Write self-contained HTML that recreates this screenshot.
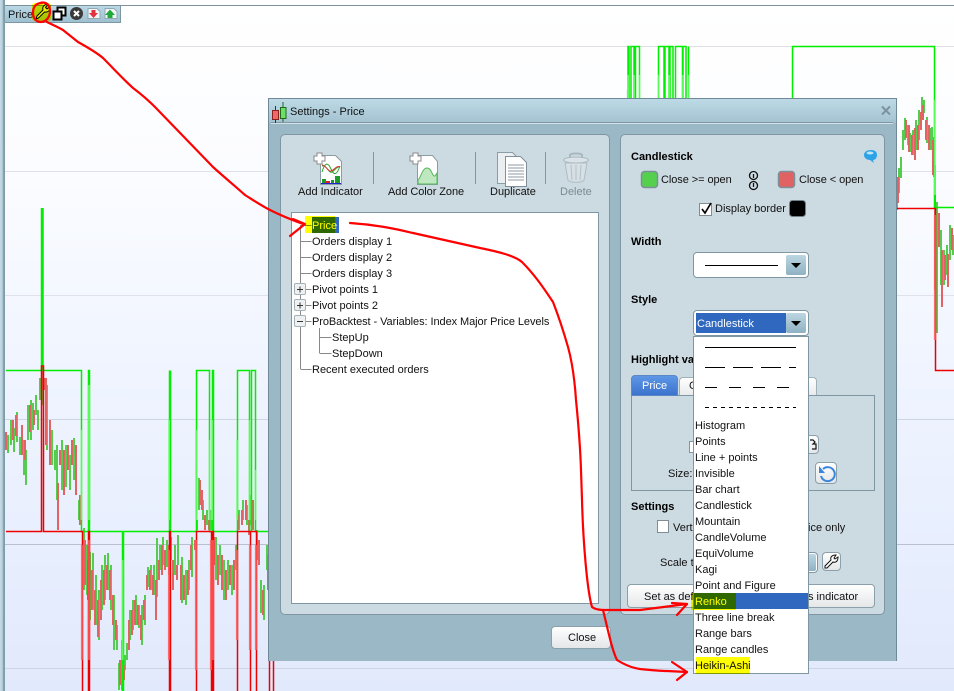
<!DOCTYPE html>
<html><head><meta charset="utf-8"><title>Settings - Price</title>
<style>
html,body{margin:0;padding:0;width:954px;height:691px;overflow:hidden}
body{position:relative;background:linear-gradient(#fff 0,#fbfcff 25%,#eff4ff 55%,#e1e9fc 100%);font:11px/16px "Liberation Sans",sans-serif;color:#111}
div,span.t{position:absolute;box-sizing:border-box}
.t{white-space:nowrap;font:11px/16px "Liberation Sans",sans-serif;color:#111;margin-top:1px}
.b{font-weight:bold;color:#000}
.n{letter-spacing:-.07px}
svg{position:absolute;left:0;top:0;overflow:visible}
.btn{background:linear-gradient(#fff,#e4e6e8);border:1px solid #8ba0ab;border-radius:4px}
.panel{background:#ccdae1;border:1px solid #7f97a3;border-radius:5px}
.combo{background:#fff;border:1px solid #7f97a3;border-radius:4px}
.drop{width:20px;background:linear-gradient(#bcd6e2,#8fb2c3);border-radius:2px}
.mark{background:#ff0;mix-blend-mode:multiply}
</style></head><body>

<svg width="954" height="691" viewBox="0 0 954 691">
<g stroke="#dfe1ea" stroke-width="1"><path d="M5 46.5H954M5 171.5H954M5 295.5H954"/></g>
<g stroke="#d0d5e3"><path d="M5 419.5H954M5 668.5H954"/></g>
<path d="M5 544.5H954" stroke="#b9c0d2"/>
<!-- candles -->
<g fill="none" stroke="#55cc4d" stroke-width="2">
<path d="M8 435V453M11 420V445M14 428V452M17 412V442M20 437V455M24 440V475M26 450V485M28 405V440M31 400V440M33 403V430M36 395V415M38 410V430M40 378V400M43 375V405M47 385V450M52 430V465M55 450V470M57 445V500M62 440V490M66 445V487M70 455V490M74 438V480M79 500V520M84 528V590M87 545V595M90 552V620M93 553V610M96 575V625M99 590V640M102 565V610M105 555V600M108 553V590M111 565V610M114 595V650M117 625V650M119 663V690M122 640V690M125 655V670M127 643V660M130 610V640M133 600V630M136 595V625M139 605V628M142 605V645M145 595V625M148 567V587M151 565V590M154 565V595M157 538V597M160 545V570M163 537V565M167 540V567M171 537V560M175 545V575M178 535V565M182 557V603M186 570V605M189 560V590M192 537V577M197 520V530M199 478V510M203 500V520M207 510V525M211 510V530M216 537V580M220 545V575M224 560V600M228 560V590M232 565V595M236 545V570M239 510V530M243 500V520M247 505V525M251 495V525M257 530V560M261 580V613M264 585V620M267 545V570"/>
<path d="M897 190V210M899 168V193M901 157V178M903 130V150M905 118V140M908 125V145M910 133V152M913 130V155M916 120V150M919 110V140M922 97V120M924 100V113M927 117V143M930 128V150M932 127V150M934 137V177M937 202V333M941 230V285M944 250V285M947 245V275M950 225V260M953 235V255"/>
<path d="M627.9 90V100"/>
</g>
<g fill="none" stroke="#e06464" stroke-width="2">
<path d="M6 432V450M13 420V440M16 415V436M22 425V455M25 440V460M30 405V432M34 410V425M42 362V390M45 378V390M46 378V445M50 420V465M58 483V530M60 450V465M64 450V495M68 445V470M72 440V465M76 445V495M80 495V525M85 540V585M88 560V600M92 570V610M95 590V625M98 600V637M101 580V620M104 570V605M107 565V590M110 570V600M113 595V625M116 620V640M120 660V685M124 665V680M129 620V650M132 610V635M135 600V625M138 605V625M141 615V640M144 600V620M147 575V590M150 570V590M153 575V595M156 580V620M159 560V580M162 545V575M165 550V570M169 545V575M173 560V590M177 565V580M181 565V600M184 575V600M188 570V595M191 545V570M195 540V550M200 480V505M202 490V510M205 515V530M209 520V530M214 537V565M218 555V585M222 555V590M226 570V600M230 565V585M234 560V590M238 515V530M242 510V525M246 500V520M249 520V535M253 500V530M259 540V565M263 590V615M268 555V590"/>
<path d="M898 177V203M906 120V138M909 125V152M912 135V155M915 128V160M918 125V150M921 112V130M923 105V120M926 120V140M929 125V150M933 140V175M935 165V290M939 213V247M942 250V307M945 255V280M948 254V287M952 228V250"/>
</g>
<!-- green step line -->
<g fill="none" stroke="#0e0" stroke-width="1.500">
<path d="M6 370.5H41.500V208M43 208V370.5H81.500V531.500H88.500V370.5H89.500V531.500H122.500V691M123.500 691V531.500H169.500V370.5M170.500 370.5V531.500H196.500V370.5H209.500V531.500H212.500V370.5H213.500V531.500H237.500V370.5H249.500V531.500H251.500V370.5H255.500V531.500H268"/>
<path d="M628 98V46.500H629V98M631 98V46.500H634V98M635.500 98V46.500H639.500V98M658.500 98V46.500H664V98M665 98V46.500H669V98M670 98V46.500H673V98M675.500 98V46.500H682.500V98M683 98V46.500H686V98M688.500 98V46.500M792.500 98V46.500H934.500V207.500H954"/>
</g>
<g stroke="#7dff7d" stroke-width="2" fill="none" opacity=".7"><path d="M81.500 430V520M89 385V520M169 420V520M196 430V520M209.500 440V520M212 420V520M237 440V520M249.500 420V520M255.500 470V520M122.500 560V660M628 75V98M634 75V98M639.500 75V98M658.500 75V98M669 75V98M682.500 75V98M688.500 75V98M935 100V195"/></g>
<!-- red step line -->
<g fill="none" stroke="#e00" stroke-width="1.500">
<path d="M6 531.500H41.500V366H43.500V531.500H82.500V691M88.500 691V531.500H89.500V691M169.500 691V531.500H170.500V691M196.500 691V531.500H211.500V691M212.500 691V531.500H213.500V691M237.500 691V531.500H250.500V691M251.500 531.500H256.500V691M269.500 661V691M273.500 661V691"/>
<path d="M897 208.500H935.500V370.500H954"/>
</g>
<g stroke="#ff5a5a" stroke-width="2.200" fill="none" opacity=".8"><path d="M82 545V660M89 540V660M169 550V660M196 540V670M211 540V670M213 540V660M237 550V640M250 545V650M256 545V650M935 215V340"/></g>
</svg>

<!-- frame -->
<div style="left:0;top:0;width:5px;height:691px;background:linear-gradient(90deg,#c5dbe6 0,#b6d0dc 50%,#8aa6b4 60%,#7e98a5 100%)"></div>
<div style="left:5px;top:5px;width:949px;height:1px;background:#7d929b"></div>
<div style="left:5px;top:6px;width:116px;height:17px;background:linear-gradient(#bad8e6,#9fc0d0);border-right:1px solid #7d96a3;border-bottom:1px solid #7d96a3"></div>
<span class="t" style="left:8px;top:6px;color:#111;font-size:11px">Price</span>
<svg width="954" height="691" viewBox="0 0 954 691">
<path d="M36 19l1-3 6-6c-1-3 1-6 5-5.500l-2.500 3 1.500 1.500 3-2.500c.5 4-2 6-5.500 5.500l-6 6z" fill="#eef24a" stroke="#000" stroke-width="1"/>
<rect x="57.500" y="7.500" width="8" height="8" fill="#fff" stroke="#000" stroke-width="2"/>
<rect x="53.500" y="11.500" width="8" height="8" fill="#fff" stroke="#000" stroke-width="2"/>
<circle cx="76.500" cy="13.500" r="6.500" fill="#3a3a3a"/>
<path d="M74 11l5 5M79 11l-5 5" stroke="#fff" stroke-width="2"/>
<path d="M88 8.500h9l3 3v7h-12z" fill="#f3f6f8" stroke="#93a8b4"/>
<path d="M91.500 10h4v3h2.500l-4.500 5-4.500-5h2.500z" fill="#e2323c"/>
<path d="M105 8.500h9l3 3v7h-12z" fill="#f3f6f8" stroke="#93a8b4"/>
<path d="M111 18h-3.500v-3h-2.500l5-5.500 5 5.500h-2.500v3z" fill="#21a93c"/>
</svg>

<!-- dialog -->
<div style="left:268px;top:98px;width:629px;height:563px;background:#9bb8c6;border:1px solid #6f8997;border-bottom:0"></div>
<div style="left:269px;top:99px;width:627px;height:24px;background:linear-gradient(#bddae6,#a3c2cf)"></div>
<div style="left:271px;top:122px;width:622px;height:1px;background:#7e98a5"></div>
<div style="left:271px;top:123px;width:622px;height:1px;background:#d3e2e9"></div>
<span class="t" style="left:290px;top:103px">Settings - Price</span>
<svg width="954" height="691" viewBox="0 0 954 691">
<path d="M275.500 106v17" stroke="#333"/><rect x="272.500" y="110.500" width="6" height="9" fill="#f06868" stroke="#8a2020"/>
<path d="M283 102v20" stroke="#1c6b1c"/><rect x="280.500" y="107.500" width="5.500" height="11" fill="#6ee06a" stroke="#1c6b1c"/>
<path d="M882 106.500l8 8M890 106.500l-8 8" stroke="#7c929e" stroke-width="2"/>
</svg>

<!-- left panel -->
<div class="panel" style="left:280px;top:134px;width:330px;height:481px"></div>
<svg width="954" height="691" viewBox="0 0 954 691">
<g stroke="#7f97a3"><path d="M373.500 152v32M475.500 152v32M545.500 152v32"/></g>
<!-- add indicator -->
<path d="M320.500 156.500h15l6 6v23h-21z" fill="#fff" stroke="#8b9ca6" transform="translate(0,-1)"/>
<path d="M322 172c3-10 6-10 9-3s6 6 9-3M322 166c4-2 7 8 10 6s5-6 8-5" fill="none" stroke="#2aa52a"/>
<path d="M322 165c4 0 6 7 9 6s6-6 9-4" fill="none" stroke="#d33"/>
<path d="M322 178h18v5h-18z" fill="#fff"/><rect x="322" y="179" width="4" height="4" fill="#1a9c2a"/><rect x="326" y="181" width="4" height="2" fill="#d22"/><rect x="331" y="180" width="3" height="3" fill="#1a9c2a"/><rect x="335" y="176" width="5" height="7" fill="#1a9c2a"/><path d="M321 183.500h20" stroke="#22c"/>
<path d="M317 153h5v3h3v5h-3v3h-5v-3h-3v-5h3z" fill="#fff" stroke="#8b8b8b"/>
<!-- add color zone -->
<path d="M417.500 155.500h15l5 6v23h-20z" fill="#fff" stroke="#8b9ca6"/>
<path d="M418 184v-4c3-2 4-12 9-12s5 9 8 8l2-3v11z" fill="#bfe8c0" stroke="#57b65c"/>
<path d="M413 153h5v3h3v5h-3v3h-5v-3h-3v-5h3z" fill="#fff" stroke="#8b8b8b"/>
<!-- duplicate -->
<path d="M497.500 152.500h15l5 5v26h-20z" fill="#eceff1" stroke="#8b9ca6"/>
<path d="M505.500 156.500h15l6 6v24h-21z" fill="#fff" stroke="#808f99"/>
<path d="M508 165h16M508 168h16M508 171h16M508 174h16M508 177h16M508 180h16" stroke="#8d9aa2"/>
<!-- trash -->
<g opacity=".55">
<path d="M570 158v-3c0-2 12-2 12 0v3" fill="none" stroke="#8f9da5" stroke-width="2"/>
<ellipse cx="576" cy="160" rx="12.500" ry="3" fill="#e6ebee" stroke="#8f9da5"/>
<path d="M565 163l3 17c2 3 14 3 16 0l3-17z" fill="#dfe5e9" stroke="#99a6ae"/>
<path d="M571 165l1 15M576 165v15M581 165l-1 15" stroke="#9caab2"/>
</g>
</svg>
<span class="t" style="left:298px;top:183px">Add Indicator</span>
<span class="t n" style="left:388px;top:183px">Add Color Zone</span>
<span class="t" style="left:490px;top:183px">Duplicate</span>
<span class="t" style="left:560px;top:183px;color:#7c8a92">Delete</span>

<!-- tree -->
<div style="left:291px;top:212px;width:308px;height:392px;background:#fff;border:1px solid #7f97a3"></div>
<div style="left:312px;top:217px;width:27px;height:16px;background:#3068c0"></div>
<svg width="954" height="691" viewBox="0 0 954 691">
<g stroke="#888" fill="none"><path d="M300.500 225v144M300.500 225.500h11M300.500 241.500h11M300.500 257.500h11M300.500 273.500h11M300.500 289.500h11M300.500 305.500h11M300.500 321.500h11M300.500 369.500h11M319.500 328v25M319.500 337.500h12M319.500 353.500h12"/></g>
<g><rect x="294.500" y="283.500" width="11" height="11" rx="1.500" fill="#eef0f1" stroke="#a5b1b8"/><rect x="294.500" y="299.500" width="11" height="11" rx="1.500" fill="#eef0f1" stroke="#a5b1b8"/><rect x="294.500" y="315.500" width="11" height="11" rx="1.500" fill="#eef0f1" stroke="#a5b1b8"/>
<path d="M297 289.500h6M300 286.500v6M297 305.500h6M300 302.500v6M297 321.500h6" stroke="#333"/></g>
</svg>
<span class="t" style="left:312px;top:217px;color:#fff">Price</span>
<span class="t" style="left:312px;top:233px">Orders display 1</span>
<span class="t" style="left:312px;top:249px">Orders display 2</span>
<span class="t" style="left:312px;top:265px">Orders display 3</span>
<span class="t" style="left:312px;top:281px">Pivot points 1</span>
<span class="t" style="left:312px;top:297px">Pivot points 2</span>
<span class="t n" style="left:312px;top:313px">ProBacktest - Variables: Index Major Price Levels</span>
<span class="t" style="left:332px;top:329px">StepUp</span>
<span class="t" style="left:332px;top:345px">StepDown</span>
<span class="t" style="left:312px;top:361px">Recent executed orders</span>

<div class="btn" style="left:551px;top:626px;width:60px;height:23px"></div>
<span class="t" style="left:568px;top:629px">Close</span>

<!-- right panel -->
<div class="panel" style="left:620px;top:134px;width:265px;height:481px"></div>
<span class="t b" style="left:631px;top:148px">Candlestick</span>
<svg width="954" height="691" viewBox="0 0 954 691">
<path d="M871 150c4 0 6 2 6 5s-2 5-4 5l1 3-4-3c-3 0-6-2-6-5s3-5 7-5z" fill="#2ba3e6"/>
<ellipse cx="870" cy="153" rx="3.500" ry="1.500" fill="#bfe7fb"/>
<rect x="641.500" y="171.500" width="16" height="16" rx="3" fill="#55d04d" stroke="#7d8f98" stroke-width="1.500"/>
<rect x="778.500" y="171.500" width="16" height="16" rx="3" fill="#e06262" stroke="#7d8f98" stroke-width="1.500"/>
<g fill="none" stroke="#111" stroke-width="1.300"><rect x="749.500" y="171.500" width="8" height="8" rx="4"/><rect x="749.500" y="181.500" width="8" height="8" rx="4"/><path d="M753.500 174v4M753.500 183v4"/></g>
<rect x="699.500" y="203.500" width="12" height="12" fill="#fff" stroke="#7f8c94"/>
<path d="M702 209l3 4 6-10" fill="none" stroke="#000" stroke-width="1.700"/>
<rect x="789.500" y="200.500" width="16" height="16" rx="3" fill="#000" stroke="#6f7f88"/>
</svg>
<span class="t n" style="left:661px;top:171px">Close &gt;= open</span>
<span class="t n" style="left:799px;top:171px">Close &lt; open</span>
<span class="t" style="left:715px;top:200px">Display border</span>
<span class="t b" style="left:631px;top:233px">Width</span>
<div class="combo" style="left:693px;top:252px;width:116px;height:26px"></div>
<div style="left:705px;top:265px;width:73px;height:1px;background:#000"></div>
<div class="drop" style="left:786px;top:255px;height:20px"></div>
<span class="t b" style="left:631px;top:291px">Style</span>
<div class="combo" style="left:693px;top:310px;width:116px;height:26px"></div>
<div style="left:696px;top:313px;width:90px;height:20px;background:#3068c0"></div>
<span class="t" style="left:697px;top:315px;color:#fff">Candlestick</span>
<div class="drop" style="left:786px;top:313px;height:20px"></div>
<svg width="954" height="691" viewBox="0 0 954 691"><path d="M791 263h10l-5 5zM791 321h10l-5 5z" fill="#000"/></svg>

<span class="t b" style="left:631px;top:351px">Highlight values</span>
<div style="left:631px;top:395px;width:244px;height:96px;border:1px solid #7f97a3"></div>
<div style="left:631px;top:375px;width:47px;height:21px;background:linear-gradient(#5f97e6,#3a73cc);border-radius:4px 4px 0 0;border:1px solid #5b87c4"></div>
<span class="t" style="left:642px;top:377px;color:#fff">Price</span>
<div style="left:679px;top:377px;width:138px;height:18px;background:linear-gradient(#fff,#e8eaec);border:1px solid #9fb1bb;border-bottom:0;border-radius:4px 4px 0 0"></div>
<span class="t" style="left:689px;top:377px">C</span>
<div style="left:689px;top:441px;width:8px;height:12px;background:#fff;border:1px solid #7f97a3"></div>
<div class="btn" style="left:800px;top:435px;width:19px;height:19px"></div>
<span class="t" style="left:668px;top:465px">Size:</span>
<div class="btn" style="left:815px;top:462px;width:22px;height:22px"></div>
<svg width="954" height="691" viewBox="0 0 954 691">
<path d="M810 440h3l2 2-2 2h3v5h-4" fill="none" stroke="#111" stroke-width="1.200"/>
<path d="M823 469a7 7 0 1 1-2 7" fill="none" stroke="#3a86dd" stroke-width="2"/><path d="M819 466v7h6z" fill="#3a86dd"/>
</svg>
<span class="t b" style="left:631px;top:498px">Settings</span>
<div style="left:657px;top:520px;width:12px;height:13px;background:#fff;border:1px solid #7f8c94"></div>
<span class="t" style="left:673px;top:519px">Vertical</span>
<span class="t" style="left:808px;top:519px">ice only</span>
<span class="t" style="left:660px;top:554px">Scale type</span>
<div class="combo" style="left:790px;top:552px;width:28px;height:21px"></div>
<div class="drop" style="left:801px;top:554px;width:15px;height:17px"></div>
<div class="btn" style="left:822px;top:552px;width:19px;height:19px"></div>
<svg width="954" height="691" viewBox="0 0 954 691"><path d="M825 568l0-2 6-6c-1-3 1-5 5-5l-2 3 1 1 3-2c0 4-2 6-5 5l-6 6z" fill="#fff" stroke="#111"/></svg>
<div class="btn" style="left:627px;top:584px;width:248px;height:24px"></div>
<span class="t" style="left:644px;top:588px">Set as default</span>
<span class="t" style="left:808px;top:588px">s indicator</span>

<!-- dropdown -->
<div style="left:693px;top:336px;width:116px;height:338px;background:#fff;border:1px solid #7f97a3"></div>
<svg width="954" height="691" viewBox="0 0 954 691"><g stroke="#000" fill="none">
<path d="M705 347.500h91"/>
<path d="M705 367.500h91" stroke-dasharray="20 8"/>
<path d="M705 387.500h84" stroke-dasharray="12 12"/>
<path d="M705 407.500h91" stroke-dasharray="4 4"/>
</g></svg>
<span class="t" style="left:695px;top:417px">Histogram</span>
<span class="t" style="left:695px;top:433px">Points</span>
<span class="t" style="left:695px;top:449px">Line + points</span>
<span class="t" style="left:695px;top:465px">Invisible</span>
<span class="t" style="left:695px;top:481px">Bar chart</span>
<span class="t" style="left:695px;top:497px">Candlestick</span>
<span class="t" style="left:695px;top:513px">Mountain</span>
<span class="t" style="left:695px;top:529px">CandleVolume</span>
<span class="t" style="left:695px;top:545px">EquiVolume</span>
<span class="t" style="left:695px;top:561px">Kagi</span>
<span class="t" style="left:695px;top:577px">Point and Figure</span>
<div style="left:694px;top:593px;width:114px;height:16px;background:#3068c0"></div>
<span class="t" style="left:695px;top:593px;color:#fff">Renko</span>
<span class="t" style="left:695px;top:609px">Three line break</span>
<span class="t" style="left:695px;top:625px">Range bars</span>
<span class="t" style="left:695px;top:641px">Range candles</span>
<span class="t" style="left:695px;top:657px">Heikin-Ashi</span>

<!-- highlighter marks -->
<div class="mark" style="left:32px;top:3px;width:19px;height:18px;border-radius:3px"></div>
<div class="mark" style="left:305px;top:216px;width:30px;height:17px"></div>
<div class="mark" style="left:691px;top:593px;width:45px;height:17px"></div>
<div class="mark" style="left:696px;top:657px;width:54px;height:17px"></div>

<!-- red annotations -->
<svg width="954" height="691" viewBox="0 0 954 691"><g fill="none" stroke="#f00" stroke-width="2.200" stroke-linejoin="round" stroke-linecap="round">
<path d="M40 3c6-2 10 2 10 8s-4 11-9 11-8-4-8-9 2-10 9-10"/>
<path d="M47 22C53 25 58 27 63 30 68 34 73 38 78 42 87 47 96 52 103 58 113 68 123 79 133 88 141 94 149 101 155 107L213 167C224 177 235 186 245 195 253 200 262 206 270 210 280 215 292 220 303 224"/>
<path d="M293 219L305 224 290 236"/>
<path d="M350 223C380 225 400 230 413 233L480 248C500 252 515 256 522 262 535 275 545 290 553 302 560 320 566 340 568 347 573 365 575 385 576 400 578 420 580 440 581 470L582 500C583 540 587 590 592 607 596 610 603 610 603 610L640 610 687 604"/>
<path d="M672 603L687 604 677 615"/>
<path d="M603 610C608 630 612 650 617 660 625 665 632 668 640 669 650 670 660 671 667 671L687 672"/>
<path d="M672 662L687 672 677 680"/>
</g></svg>
</body></html>
